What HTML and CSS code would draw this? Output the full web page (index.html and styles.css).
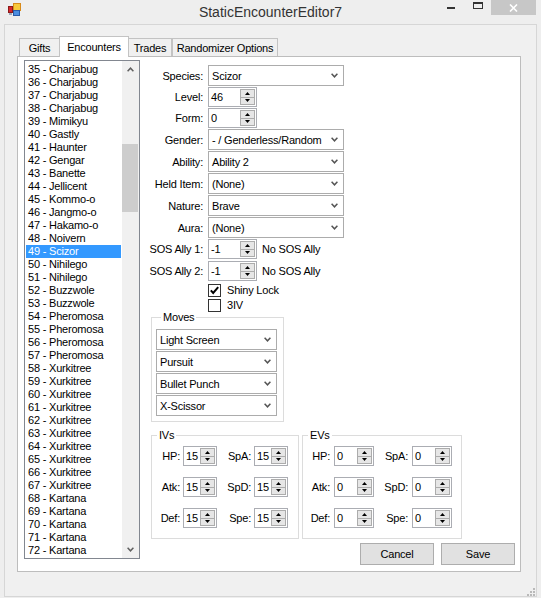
FILE: index.html
```html
<!DOCTYPE html>
<html>
<head>
<meta charset="UTF-8" /><title>StaticEncounterEditor7</title>
<link rel="stylesheet" href="styles.css">
</head>
<body>
<!-- title bar -->
<div class="titlebar">
	<svg class="appicon" width="13" height="13" viewBox="0 0 13 13">
		<rect x="0.5" y="3.5" width="4" height="6" fill="#d8262d" stroke="#8a1a1a" stroke-width="1"/>
		<rect x="5.5" y="0.5" width="7" height="7" fill="#f7c93c" stroke="#d88a1a" stroke-width="1"/>
		<rect x="5.5" y="7.5" width="6" height="5" fill="#4b8ee0" stroke="#2a5aa8" stroke-width="1"/>
		<rect x="1" y="10" width="3" height="2" fill="#9aa7b8"/>
	</svg>
	<div class="title">StaticEncounterEditor7</div>
	<div class="caption-buttons">
		<span class="btn-min"></span>
		<span class="btn-max"></span>
		<span class="btn-close">
			<svg width="9" height="8" viewBox="0 0 9 8"><path d="M1 0.5L8 7.5M8 0.5L1 7.5" stroke="#fff" stroke-width="1.6"/></svg>
		</span>
	</div>
</div>

<div class="client">
	<div class="tabstrip">
		<span class="tab gifts">Gifts</span>
		<span class="tab active encounters">Encounters</span>
		<span class="tab trades">Trades</span>
		<span class="tab randomizer">Randomizer Options</span>
	</div>

	<div class="panel">
		<!-- encounter list -->
		<div class="listbox">
			<div class="list-items">
				<div>35 - Charjabug</div>
				<div>36 - Charjabug</div>
				<div>37 - Charjabug</div>
				<div>38 - Charjabug</div>
				<div>39 - Mimikyu</div>
				<div>40 - Gastly</div>
				<div>41 - Haunter</div>
				<div>42 - Gengar</div>
				<div>43 - Banette</div>
				<div>44 - Jellicent</div>
				<div>45 - Kommo-o</div>
				<div>46 - Jangmo-o</div>
				<div>47 - Hakamo-o</div>
				<div>48 - Noivern</div>
				<div class="sel">49 - Scizor</div>
				<div>50 - Nihilego</div>
				<div>51 - Nihilego</div>
				<div>52 - Buzzwole</div>
				<div>53 - Buzzwole</div>
				<div>54 - Pheromosa</div>
				<div>55 - Pheromosa</div>
				<div>56 - Pheromosa</div>
				<div>57 - Pheromosa</div>
				<div>58 - Xurkitree</div>
				<div>59 - Xurkitree</div>
				<div>60 - Xurkitree</div>
				<div>61 - Xurkitree</div>
				<div>62 - Xurkitree</div>
				<div>63 - Xurkitree</div>
				<div>64 - Xurkitree</div>
				<div>65 - Xurkitree</div>
				<div>66 - Xurkitree</div>
				<div>67 - Xurkitree</div>
				<div>68 - Kartana</div>
				<div>69 - Kartana</div>
				<div>70 - Kartana</div>
				<div>71 - Kartana</div>
				<div>72 - Kartana</div>
			</div>
			<div class="vscroll">
				<div class="sb-btn"><svg width="7" height="5" viewBox="0 0 7 5"><path d="M0.6 4.2L3.5 1.2L6.4 4.2" stroke="#606060" stroke-width="1.5" fill="none"/></svg></div>
				<div class="sb-thumb"></div>
				<div class="sb-space"></div>
				<div class="sb-btn"><svg width="7" height="5" viewBox="0 0 7 5"><path d="M0.6 0.8L3.5 3.8L6.4 0.8" stroke="#606060" stroke-width="1.5" fill="none"/></svg></div>
			</div>
		</div>

		<!-- editor -->
		<div class="editor">
			<div class="fields">
				<div class="row">
					<span class="lbl">Species:</span>
					<div class="combo"><span>Scizor</span><svg width="7" height="5" viewBox="0 0 7 5"><path d="M0.6 0.8L3.5 3.8L6.4 0.8" stroke="#555" stroke-width="1.5" fill="none"/></svg></div>
				</div>
				<div class="row">
					<span class="lbl">Level:</span>
					<div class="num"><span>46</span><div class="spin"><i><svg width="5" height="3"><path d="M2.5 0L5 3H0Z"/></svg></i><i><svg width="5" height="3"><path d="M0 0H5L2.5 3Z"/></svg></i></div></div>
				</div>
				<div class="row">
					<span class="lbl">Form:</span>
					<div class="num"><span>0</span><div class="spin"><i><svg width="5" height="3"><path d="M2.5 0L5 3H0Z"/></svg></i><i><svg width="5" height="3"><path d="M0 0H5L2.5 3Z"/></svg></i></div></div>
				</div>
				<div class="row">
					<span class="lbl">Gender:</span>
					<div class="combo"><span>- / Genderless/Random</span><svg width="7" height="5" viewBox="0 0 7 5"><path d="M0.6 0.8L3.5 3.8L6.4 0.8" stroke="#555" stroke-width="1.5" fill="none"/></svg></div>
				</div>
				<div class="row">
					<span class="lbl">Ability:</span>
					<div class="combo"><span>Ability 2</span><svg width="7" height="5" viewBox="0 0 7 5"><path d="M0.6 0.8L3.5 3.8L6.4 0.8" stroke="#555" stroke-width="1.5" fill="none"/></svg></div>
				</div>
				<div class="row">
					<span class="lbl">Held Item:</span>
					<div class="combo"><span>(None)</span><svg width="7" height="5" viewBox="0 0 7 5"><path d="M0.6 0.8L3.5 3.8L6.4 0.8" stroke="#555" stroke-width="1.5" fill="none"/></svg></div>
				</div>
				<div class="row">
					<span class="lbl">Nature:</span>
					<div class="combo"><span>Brave</span><svg width="7" height="5" viewBox="0 0 7 5"><path d="M0.6 0.8L3.5 3.8L6.4 0.8" stroke="#555" stroke-width="1.5" fill="none"/></svg></div>
				</div>
				<div class="row">
					<span class="lbl">Aura:</span>
					<div class="combo"><span>(None)</span><svg width="7" height="5" viewBox="0 0 7 5"><path d="M0.6 0.8L3.5 3.8L6.4 0.8" stroke="#555" stroke-width="1.5" fill="none"/></svg></div>
				</div>
				<div class="row">
					<span class="lbl">SOS Ally 1:</span>
					<div class="num"><span>-1</span><div class="spin"><i><svg width="5" height="3"><path d="M2.5 0L5 3H0Z"/></svg></i><i><svg width="5" height="3"><path d="M0 0H5L2.5 3Z"/></svg></i></div></div>
					<span class="note">No SOS Ally</span>
				</div>
				<div class="row sos2">
					<span class="lbl">SOS Ally 2:</span>
					<div class="num"><span>-1</span><div class="spin"><i><svg width="5" height="3"><path d="M2.5 0L5 3H0Z"/></svg></i><i><svg width="5" height="3"><path d="M0 0H5L2.5 3Z"/></svg></i></div></div>
					<span class="note">No SOS Ally</span>
				</div>
				<div class="check-row shiny">
					<span class="checkbox"><svg width="11" height="11" viewBox="0 0 11 11"><path d="M1.8 5.4L4.2 8L9.2 2.2" stroke="#000" stroke-width="2" fill="none"/></svg></span>
					<span>Shiny Lock</span>
				</div>
				<div class="check-row">
					<span class="checkbox"></span>
					<span>3IV</span>
				</div>
			</div>

			<div class="group moves">
				<span class="group-title">Moves</span>
				<div class="stack">
					<div class="combo"><span>Light Screen</span><svg width="7" height="5" viewBox="0 0 7 5"><path d="M0.6 0.8L3.5 3.8L6.4 0.8" stroke="#555" stroke-width="1.5" fill="none"/></svg></div>
					<div class="combo"><span>Pursuit</span><svg width="7" height="5" viewBox="0 0 7 5"><path d="M0.6 0.8L3.5 3.8L6.4 0.8" stroke="#555" stroke-width="1.5" fill="none"/></svg></div>
					<div class="combo"><span>Bullet Punch</span><svg width="7" height="5" viewBox="0 0 7 5"><path d="M0.6 0.8L3.5 3.8L6.4 0.8" stroke="#555" stroke-width="1.5" fill="none"/></svg></div>
					<div class="combo"><span>X-Scissor</span><svg width="7" height="5" viewBox="0 0 7 5"><path d="M0.6 0.8L3.5 3.8L6.4 0.8" stroke="#555" stroke-width="1.5" fill="none"/></svg></div>
				</div>
			</div>

			<div class="stats">
				<div class="group ivs">
					<span class="group-title">IVs</span>
					<div class="stat-grid">
						<span class="lbl">HP:</span>
						<div class="num"><span>15</span><div class="spin"><i><svg width="5" height="3"><path d="M2.5 0L5 3H0Z"/></svg></i><i><svg width="5" height="3"><path d="M0 0H5L2.5 3Z"/></svg></i></div></div>
						<span class="lbl">SpA:</span>
						<div class="num"><span>15</span><div class="spin"><i><svg width="5" height="3"><path d="M2.5 0L5 3H0Z"/></svg></i><i><svg width="5" height="3"><path d="M0 0H5L2.5 3Z"/></svg></i></div></div>
						<span class="lbl">Atk:</span>
						<div class="num"><span>15</span><div class="spin"><i><svg width="5" height="3"><path d="M2.5 0L5 3H0Z"/></svg></i><i><svg width="5" height="3"><path d="M0 0H5L2.5 3Z"/></svg></i></div></div>
						<span class="lbl">SpD:</span>
						<div class="num"><span>15</span><div class="spin"><i><svg width="5" height="3"><path d="M2.5 0L5 3H0Z"/></svg></i><i><svg width="5" height="3"><path d="M0 0H5L2.5 3Z"/></svg></i></div></div>
						<span class="lbl">Def:</span>
						<div class="num"><span>15</span><div class="spin"><i><svg width="5" height="3"><path d="M2.5 0L5 3H0Z"/></svg></i><i><svg width="5" height="3"><path d="M0 0H5L2.5 3Z"/></svg></i></div></div>
						<span class="lbl">Spe:</span>
						<div class="num"><span>15</span><div class="spin"><i><svg width="5" height="3"><path d="M2.5 0L5 3H0Z"/></svg></i><i><svg width="5" height="3"><path d="M0 0H5L2.5 3Z"/></svg></i></div></div>
					</div>
				</div>
				<div class="group evs">
					<span class="group-title">EVs</span>
					<div class="stat-grid">
						<span class="lbl">HP:</span>
						<div class="num"><span>0</span><div class="spin"><i><svg width="5" height="3"><path d="M2.5 0L5 3H0Z"/></svg></i><i><svg width="5" height="3"><path d="M0 0H5L2.5 3Z"/></svg></i></div></div>
						<span class="lbl">SpA:</span>
						<div class="num"><span>0</span><div class="spin"><i><svg width="5" height="3"><path d="M2.5 0L5 3H0Z"/></svg></i><i><svg width="5" height="3"><path d="M0 0H5L2.5 3Z"/></svg></i></div></div>
						<span class="lbl">Atk:</span>
						<div class="num"><span>0</span><div class="spin"><i><svg width="5" height="3"><path d="M2.5 0L5 3H0Z"/></svg></i><i><svg width="5" height="3"><path d="M0 0H5L2.5 3Z"/></svg></i></div></div>
						<span class="lbl">SpD:</span>
						<div class="num"><span>0</span><div class="spin"><i><svg width="5" height="3"><path d="M2.5 0L5 3H0Z"/></svg></i><i><svg width="5" height="3"><path d="M0 0H5L2.5 3Z"/></svg></i></div></div>
						<span class="lbl">Def:</span>
						<div class="num"><span>0</span><div class="spin"><i><svg width="5" height="3"><path d="M2.5 0L5 3H0Z"/></svg></i><i><svg width="5" height="3"><path d="M0 0H5L2.5 3Z"/></svg></i></div></div>
						<span class="lbl">Spe:</span>
						<div class="num"><span>0</span><div class="spin"><i><svg width="5" height="3"><path d="M2.5 0L5 3H0Z"/></svg></i><i><svg width="5" height="3"><path d="M0 0H5L2.5 3Z"/></svg></i></div></div>
					</div>
				</div>
			</div>

			<div class="actions">
				<span class="button">Cancel</span>
				<span class="button">Save</span>
			</div>
		</div>
	</div>

	<div class="gripbar">
		<svg width="8" height="8" viewBox="0 0 8 8" fill="#b9b9b9">
			<rect x="6" y="0" width="2" height="2"/>
			<rect x="3" y="3" width="2" height="2"/><rect x="6" y="3" width="2" height="2"/>
			<rect x="0" y="6" width="2" height="2"/><rect x="3" y="6" width="2" height="2"/><rect x="6" y="6" width="2" height="2"/>
		</svg>
	</div>
</div>
</body>
</html>
```

FILE: styles.css
```css
* {
	padding: 0px;
	margin: 0px;
	box-sizing: border-box;
}
body {
	width: 541px;
	height: 598px;
	overflow: hidden;
	background: #eeeeee;
	color: #000;
	font: 11px "Liberation Sans", Arial, sans-serif;
	letter-spacing: -0.2px;
}

/* title bar */
.titlebar {
	height: 24px;
	display: grid;
	grid-template-columns: 1fr auto 1fr;
}
.appicon {
	margin: 3px 0 0 8px;
}
.title {
	font-size: 14px;
	letter-spacing: 0;
	line-height: 24px;
	color: #333;
}
.caption-buttons {
	display: flex;
	justify-content: flex-end;
	align-items: flex-start;
	padding-right: 5px;
}
.btn-min {
	width: 8px;
	height: 2px;
	margin-top: 7px;
	background: #333;
}
.btn-max {
	width: 10px;
	height: 7px;
	margin: 2px 8px 0 18px;
	border: 1px solid #333;
	border-top-width: 2px;
}
.btn-close {
	width: 45px;
	height: 15px;
	background: #c7c7c7;
	display: flex;
	align-items: center;
	justify-content: center;
}

/* client area */
.client {
	margin-left: 4px;
	width: 533px;
	height: 573px;
	padding-left: 12px;
	border: 1px solid #d6d6d6;
	background: #f0f0f0;
}
.tabstrip {
	height: 31px;
	padding-left: 2px;
	display: flex;
	align-items: flex-end;
}
.tab {
	height: 18px;
	padding-top: 3px;
	line-height: 13px;
	text-align: center;
	border: 1px solid #c3c3c3;
	border-bottom: none;
	background: #f0f0f0;
}
.tab.active {
	height: 21px;
	padding-top: 4px;
	margin-bottom: -1px;
	background: #fff;
	position: relative;
	z-index: 1;
}
.gifts { width: 41px; }
.encounters { width: 70px; margin-left: -1px; }
.trades { width: 44px; margin-left: -1px; }
.randomizer { width: 106px; }

.panel {
	width: 504px;
	height: 516px;
	border: 1px solid #bdbdbd;
	background: #fff;
	display: flex;
	align-items: flex-start;
}

/* list */
.listbox {
	margin: 3px 0 0 6px;
	width: 116px;
	height: 499px;
	border: 1px solid #828790;
	display: flex;
}
.list-items {
	flex: 1;
	padding: 2px 1px 0;
	overflow: hidden;
}
.list-items div {
	height: 13px;
	line-height: 13px;
	padding-left: 2px;
	white-space: nowrap;
}
.list-items .sel {
	background: #3399ff;
	color: #fff;
}
.vscroll {
	width: 17px;
	background: #f0f0f0;
	display: flex;
	flex-direction: column;
}
.sb-btn {
	height: 17px;
	display: flex;
	align-items: center;
	justify-content: center;
}
.sb-thumb {
	height: 68px;
	margin: 66px 1px 0 0;
	background: #cdcdcd;
}
.sb-space {
	flex: 1;
}

/* editor */
.editor {
	width: 374px;
	margin-left: 5px;
	padding-top: 8px;
}
.fields {
	display: flex;
	flex-direction: column;
	gap: 1px;
}
.row {
	display: flex;
	align-items: center;
}
.row .lbl {
	width: 58px;
	margin-right: 5px;
	text-align: right;
	white-space: nowrap;
}
.sos2 {
	margin-top: 1px;
}
.note {
	margin-left: 5px;
}
.combo {
	width: 136px;
	height: 21px;
	padding-left: 3px;
	border: 1px solid #acacac;
	background: #fff;
	display: flex;
	align-items: center;
}
.combo span {
	flex: 1;
	white-space: nowrap;
}
.combo svg {
	margin-right: 5px;
}
.num {
	width: 49px;
	height: 20px;
	border: 1px solid #abadb3;
	background: #fff;
	display: flex;
}
.num span {
	flex: 1;
	padding-left: 2px;
	line-height: 18px;
}
.spin {
	width: 15px;
	margin: 1px 1px 1px 0;
	border: 1px solid #acacac;
	background: #e6e6e6;
	display: flex;
	flex-direction: column;
}
.spin i {
	flex: 1;
	display: flex;
	align-items: center;
	justify-content: center;
}
.spin i + i {
	border-top: 1px solid #acacac;
}

.check-row {
	height: 14px;
	padding-left: 63px;
	display: flex;
	align-items: center;
	gap: 6px;
}
.shiny {
	margin-top: 1px;
}
.checkbox {
	width: 13px;
	height: 13px;
	border: 1px solid #333;
	background: #fff;
	display: flex;
	align-items: center;
	justify-content: center;
}

/* group boxes */
.group {
	border: 1px solid #dcdcdc;
	display: flex;
	flex-direction: column;
}
.group-title {
	align-self: flex-start;
	margin: -7px 0 0 5px;
	padding: 0 2px;
	line-height: 13px;
	background: #fff;
}
.moves {
	width: 133px;
	margin: 5px 0 0 6px;
	padding: 0 0 5px 4px;
}
.moves .stack {
	margin-top: 5px;
	display: flex;
	flex-direction: column;
	gap: 1px;
}
.moves .combo {
	width: 121px;
}

.stats {
	margin: 13px 0 0 6px;
	display: flex;
	gap: 3px;
}
.ivs { width: 148px; }
.evs { width: 160px; }
.stat-grid {
	margin-top: 4px;
	padding-bottom: 10px;
	display: grid;
	row-gap: 11px;
	align-items: center;
}
.ivs .stat-grid {
	grid-template-columns: 31px 34px 37px 34px;
}
.evs .stat-grid {
	grid-template-columns: 31px 40px 38px 40px;
}
.stat-grid .lbl {
	text-align: right;
	padding-right: 3px;
}
.evs .stat-grid .lbl {
	padding-right: 4px;
}
.stat-grid .num {
	width: auto;
}

.actions {
	margin-top: 4px;
	padding-right: 4px;
	display: flex;
	justify-content: flex-end;
	gap: 7px;
}
.button {
	width: 74px;
	height: 22px;
	border: 1px solid #adadad;
	background: #e1e1e1;
	display: flex;
	align-items: center;
	justify-content: center;
}

.gripbar {
	margin-top: 16px;
	padding-right: 1px;
	display: flex;
	justify-content: flex-end;
}
```
